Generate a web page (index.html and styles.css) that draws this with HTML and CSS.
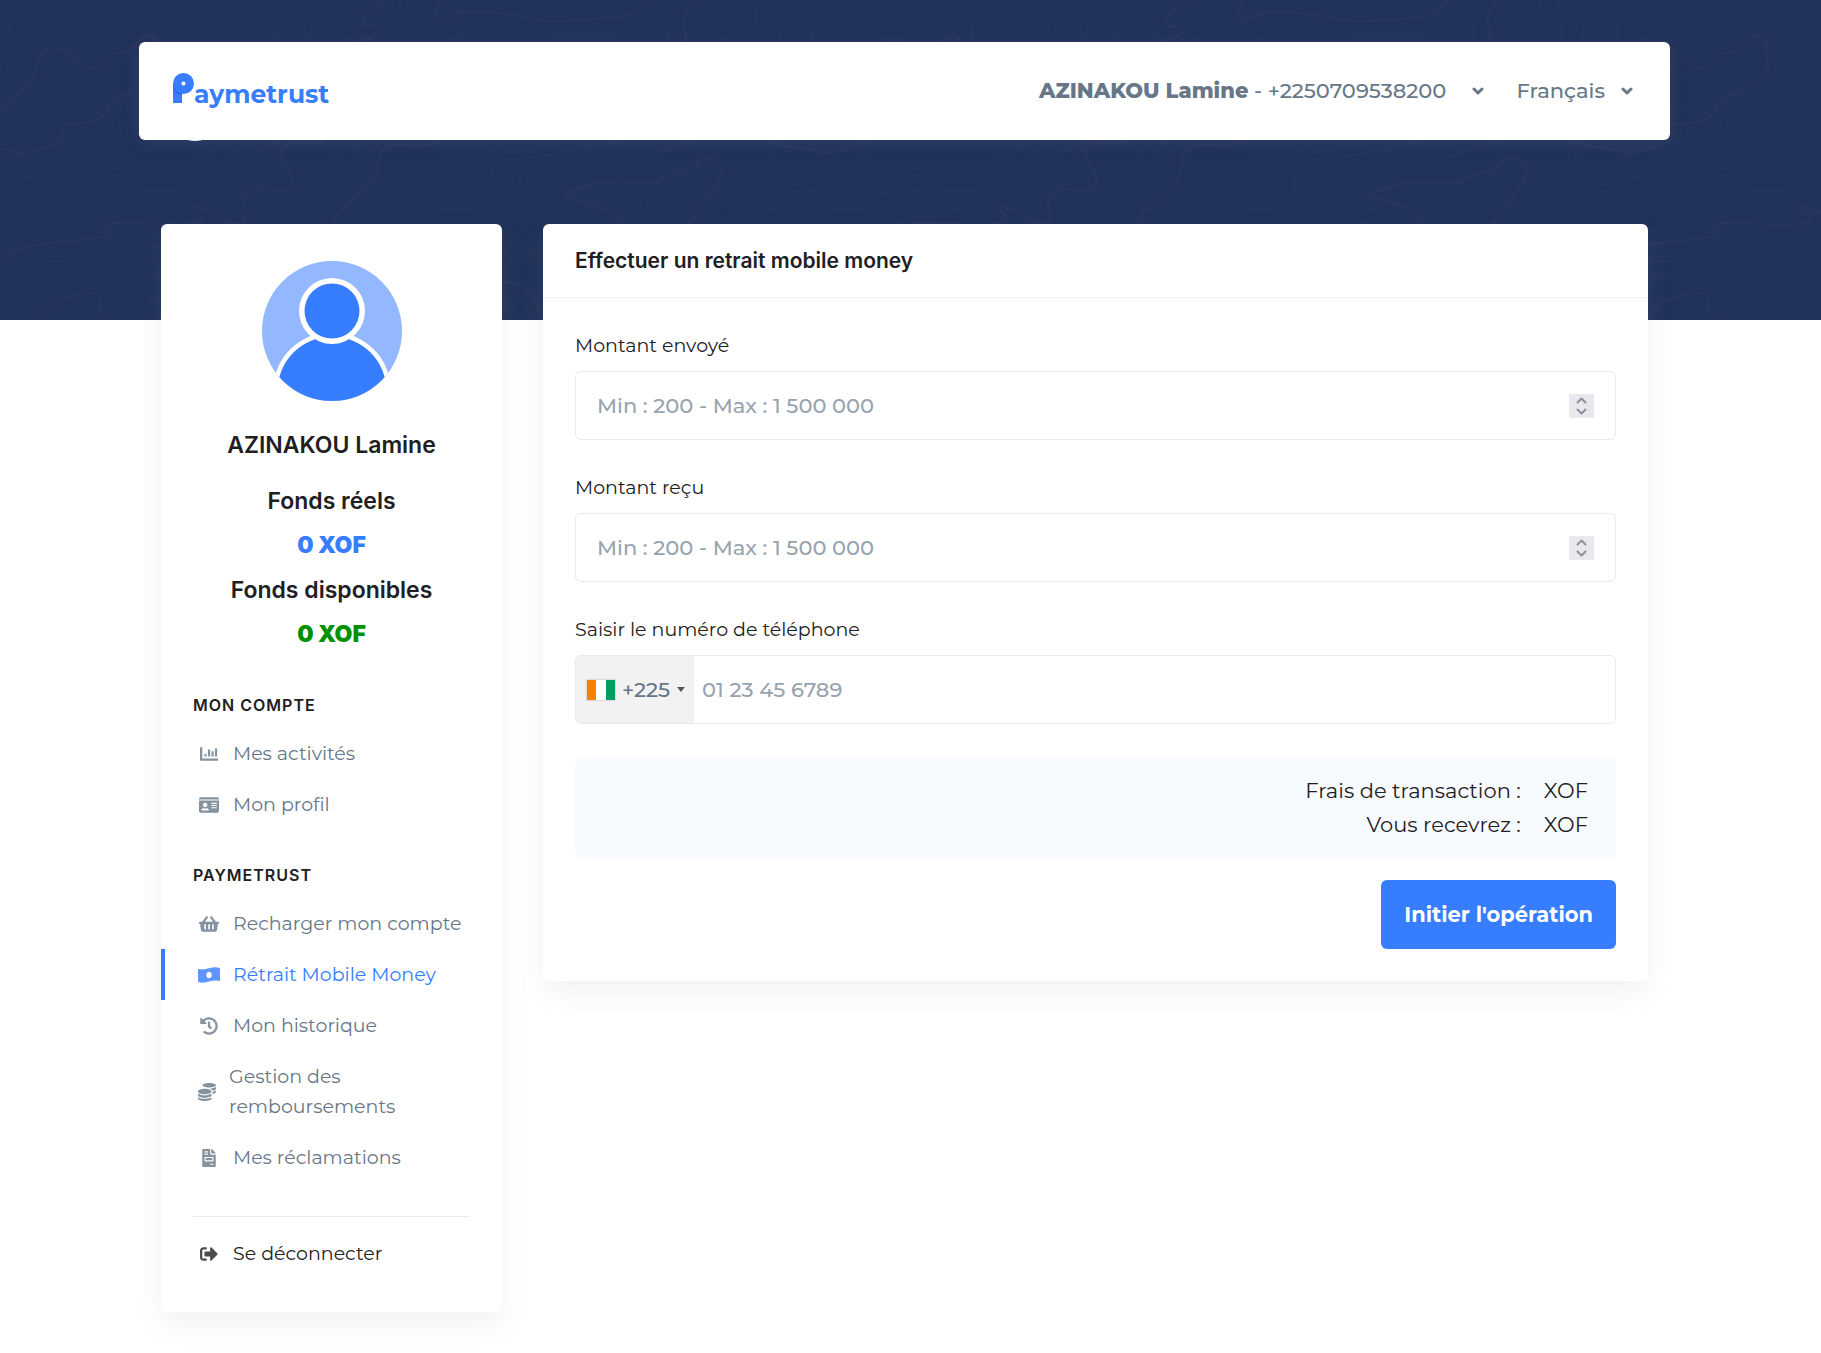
FILE: index.html
```html
<!DOCTYPE html>
<html lang="fr">
<head>
  <meta charset="utf-8">
  <meta name="viewport" content="width=device-width, initial-scale=1">
  <title>Paymetrust - Retrait Mobile Money</title>
  <link rel="stylesheet" href="styles.css">
</head>
<body>
  <div class="page">
    <svg class="hero" aria-hidden="true">
      <defs>
        <g id="contours" fill="none">
          <g stroke="#29355f" stroke-width="2">
            <path d="M-20 130Q-8 118 0 110T23 90T34 77Q38 58 42 53T55 48T80 62T103 63T126 53L143 37Q149 32 155 39Q161 48 160 58Q158 72 154 77T131 90T107 110T79 123T63 133T36 150T18 155T-4 148T-24 140"/>
            <path d="M-10 266Q10 252 23 248T80 240T109 228T153 224T199 213T218 216T245 210T272 190T287 167T306 143T330 100T356 42T371 27T385 0"/>
            <path d="M333 223Q340 210 348 203T367 187T379 160T406 145T440 140"/>
            <path d="M440 0L435 14Q436 21 446 19L460 12Q466 10 495 13T539 20T625 16Q636 12 644 0"/>
            <path d="M693 0Q680 18 684 28T683 42"/>
            <path d="M622 223Q614 215 606 210T578 200T572 191T594 184T634 182T657 183T677 173T697 161Q710 156 715 160Q724 166 722 174T701 207T691 223"/>
            <path d="M38 320Q52 302 57 300T82 294T100 302T111 320"/>
            <path d="M503 282Q515 282 520 285T530 293T540 312"/>
          </g>
          <g stroke="#263660" stroke-width="1">
            <path d="M34 0Q48 8 57 9T84 15T103 12T124 0"/>
            <path d="M0 70Q6 55 8 40T10 0"/>
            <path d="M0 97Q12 84 19 73T31 50T42 33T57 28T80 37T99 37T126 23L153 13Q166 10 167 22T170 50T158 90T135 100T117 113T87 137T67 143T44 168T22 173T-8 163T-32 155T-39 140"/>
            <path d="M57 62Q70 80 77 78L108 73Q121 76 117 84T103 97T69 110T34 132T19 134T8 120T23 103T42 87T50 67Q53 60 57 62Z"/>
            <path d="M0 182Q20 180 38 177T77 172T134 166T172 165T199 158T218 140"/>
            <path d="M0 191Q20 190 38 187T77 180T126 175T172 178T207 173T230 157T245 140"/>
            <path d="M0 200Q25 199 46 197T96 192T134 190T191 190T226 182T256 153T272 140"/>
            <path d="M0 212Q30 211 57 208T100 203T142 192T180 203T207 203T237 193T268 167T291 140"/>
            <path d="M0 240Q20 234 38 232T77 227T103 220T134 212T161 208"/>
            <path d="M0 272Q20 260 38 258T69 255T100 255T130 245T161 237"/>
            <path d="M0 297Q8 282 15 277T38 265T92 265T126 257T161 248"/>
            <path d="M0 308Q8 295 15 290T38 273"/>
            <path d="M3 320Q20 292 30 285T62 279T100 278Q115 278 117 292T128 320"/>
            <path d="M132 279Q150 276 161 277M132 279Q136 294 150 296T160 320"/>
            <path d="M268 223Q290 205 302 197T321 177T333 160T342 140"/>
            <path d="M291 223Q305 202 318 197T348 178T356 157T364 140"/>
            <path d="M314 223Q326 200 340 193T361 170T370 153T382 140"/>
            <path d="M390 223Q405 203 412 195T430 190T442 177T450 157T480 157T530 158T610 143T680 141"/>
            <path d="M417 223Q440 207 450 209T477 207T492 193T493 160T510 153Q520 150 534 153T589 158T650 155T690 140"/>
            <path d="M520 180Q516 166 530 169T580 172T640 160T700 141M520 180Q525 196 550 203T590 223"/>
            <path d="M649 215Q642 207 653 198T680 178T710 172Q714 180 700 195T675 213T649 215Z"/>
            <path d="M500 225Q530 212 550 220T590 226"/>
            <path d="M724 223Q735 197 748 187T780 182T804 182"/>
            <path d="M735 223Q752 200 768 196T804 191"/>
            <path d="M750 223Q768 209 782 206T804 200"/>
            <path d="M190 0V42M218 0V42M251 0V42M281 0Q275 20 277 30T280 42"/>
            <path d="M310 42Q309 23 318 17T346 13T364 0"/>
            <path d="M344 42Q370 22 384 19T402 0M366 42Q390 22 400 16T414 0M390 42Q410 22 418 14T428 0"/>
            <path d="M450 42Q465 28 480 27T550 33T640 27Q650 20 652 0"/>
            <path d="M470 0Q540 10 560 9T620 0"/>
            <path d="M668 42Q670 25 666 0M722 42Q740 28 736 0M758 42Q756 20 755 0M780 42Q779 20 775 0"/>
            <path d="M503 250Q520 244 543 252M503 295Q522 292 530 320M503 303Q516 302 520 320M503 310Q510 312 512 320"/>
          </g>
        </g>
        <pattern id="topography" width="804" height="320" patternUnits="userSpaceOnUse">
          <use href="#contours" x="-804"/>
          <use href="#contours"/>
          <use href="#contours" x="804"/>
        </pattern>
      </defs>
      <rect width="100%" height="100%" fill="#21325b"/>
      <rect width="100%" height="100%" fill="url(#topography)"/>
    </svg>

    <div class="container">
      <div class="topbar-wrap">
        <span class="topbar-bump" aria-hidden="true"></span>
        <header class="topbar">
          <a class="logo" href="#" aria-label="Paymetrust">
            <svg width="21" height="30" viewBox="0 0 21 30" aria-hidden="true">
              <path d="M0 10H9V30H0Z" fill="#377dff"/>
              <path d="M0 15Q3 21 9 21.500V20L2 12Z" fill="#1f5fd0"/>
              <circle cx="10.500" cy="10.500" r="10.500" fill="#377dff"/>
              <circle cx="10.500" cy="10.500" r="2" fill="#fff"/>
            </svg>
            <span class="logo-text">aymetrust</span>
          </a>
          <nav class="topbar-nav" aria-label="Compte">
            <button class="menu-button menu-button-user" type="button">
              <span><strong>AZINAKOU Lamine</strong> - +2250709538200</span>
              <svg width="12" height="8" viewBox="0 0 12 8" aria-hidden="true"><path d="M2 2L6 6L10 2" fill="none" stroke="currentColor" stroke-width="3" stroke-linecap="round" stroke-linejoin="round"/></svg>
            </button>
            <button class="menu-button" type="button">
              <span>Français</span>
              <svg width="12" height="8" viewBox="0 0 12 8" aria-hidden="true"><path d="M2 2L6 6L10 2" fill="none" stroke="currentColor" stroke-width="3" stroke-linecap="round" stroke-linejoin="round"/></svg>
            </button>
          </nav>
        </header>
      </div>

      <div class="layout">
        <aside class="card sidebar">
          <svg class="avatar" width="140" height="140" viewBox="0 0 140 140" role="img" aria-label="Avatar">
            <clipPath id="disc"><circle cx="70" cy="70" r="70"/></clipPath>
            <g clip-path="url(#disc)">
              <rect width="140" height="140" fill="#93b8ff"/>
              <circle cx="70" cy="130" r="59" fill="#fff"/>
              <circle cx="70" cy="130" r="54.500" fill="#377dff"/>
              <circle cx="70" cy="50" r="33" fill="#fff"/>
              <circle cx="70" cy="50" r="27.500" fill="#377dff"/>
            </g>
          </svg>
          <h2 class="user-name">AZINAKOU Lamine</h2>
          <dl class="funds">
            <dt>Fonds réels</dt>
            <dd>0 XOF</dd>
            <dt>Fonds disponibles</dt>
            <dd class="available">0 XOF</dd>
          </dl>

          <h3 class="nav-title">Mon compte</h3>
          <ul class="nav">
            <li><a href="#"><span class="icon"><svg viewBox="0 0 512 512" width="18" height="18" aria-hidden="true"><path d="M0 64H64V384H512V448H32Q0 448 0 416ZM128 256H188V328H128ZM228 128H288V328H228ZM328 176H388V328H328ZM428 96H488V328H428Z"/></svg></span>Mes activités</a></li>
            <li><a href="#"><span class="icon"><svg viewBox="0 0 576 512" width="20" height="18" aria-hidden="true"><path fill-rule="evenodd" d="M528 32H48C21.500 32 0 53.500 0 80v16h576V80c0-26.500-21.500-48-48-48zM0 432c0 26.500 21.500 48 48 48h480c26.500 0 48-21.500 48-48V128H0v304zm352-240h160v32H352zm0 64h160v32H352zm0 64h160v32H352zM176 192c35.300 0 64 28.700 64 64s-28.700 64-64 64-64-28.700-64-64 28.700-64 64-64zM67.100 396.200C75.500 370.500 99.600 352 128 352h8.200c12.300 5.100 25.700 8 39.800 8s27.600-2.900 39.800-8h8.200c28.400 0 52.500 18.500 60.900 44.200 3.200 9.900-5.200 19.800-15.600 19.800H82.700c-10.400 0-18.800-10-15.600-19.800z"/></svg></span>Mon profil</a></li>
          </ul>

          <h3 class="nav-title">Paymetrust</h3>
          <ul class="nav">
            <li><a href="#"><span class="icon"><svg viewBox="0 0 576 512" width="20" height="18" aria-hidden="true"><path fill-rule="evenodd" d="M576 216v16c0 13.255-10.745 24-24 24h-8l-26.113 182.788C514.509 462.435 494.257 480 470.370 480H105.630c-23.887 0-44.139-17.565-47.518-41.212L32 256h-8c-13.255 0-24-10.745-24-24v-16c0-13.255 10.745-24 24-24h67.341l106.780-146.821c10.395-14.292 30.407-17.453 44.701-7.058 14.293 10.395 17.453 30.408 7.058 44.701L170.477 192h235.046L326.120 82.821c-10.395-14.292-7.234-34.306 7.059-44.701 14.291-10.395 34.306-7.235 44.701 7.058L484.659 192H552c13.255 0 24 10.745 24 24zM312 392V280c0-13.255-10.745-24-24-24s-24 10.745-24 24v112c0 13.255 10.745 24 24 24s24-10.745 24-24zm112 0V280c0-13.255-10.745-24-24-24s-24 10.745-24 24v112c0 13.255 10.745 24 24 24s24-10.745 24-24zm-224 0V280c0-13.255-10.745-24-24-24s-24 10.745-24 24v112c0 13.255 10.745 24 24 24s24-10.745 24-24z"/></svg></span>Recharger mon compte</a></li>
            <li><a class="active" href="#" aria-current="page"><span class="icon"><svg viewBox="0 0 640 512" width="22" height="18" aria-hidden="true"><path d="M621.160 54.460C582.370 38.190 543.550 32 504.750 32c-123.170-.01-246.330 62.340-369.500 62.340-30.890 0-61.760-3.920-92.650-13.720-3.470-1.100-6.950-1.620-10.350-1.620C15.040 79 0 92.320 0 110.810v317.260c0 12.630 7.230 24.600 18.840 29.460C57.630 473.810 96.450 480 135.250 480c123.170 0 246.340-62.350 369.510-62.350 30.890 0 61.760 3.920 92.650 13.720 3.470 1.100 6.950 1.620 10.350 1.620 17.210 0 32.250-13.320 32.250-31.810V83.930c-.01-12.640-7.240-24.600-18.850-29.470zM320 352c-44.190 0-80-42.990-80-96 0-53.020 35.820-96 80-96s80 42.980 80 96c0 53.030-35.830 96-80 96z"/></svg></span>Rétrait Mobile Money</a></li>
            <li><a href="#"><span class="icon"><svg viewBox="0 0 512 512" width="18" height="18" aria-hidden="true"><path d="M504 255.531c.253 136.640-111.180 248.372-247.820 248.468-59.015.042-113.223-20.530-155.822-54.911-11.077-8.940-11.905-25.541-1.839-35.607l11.267-11.267c8.609-8.609 22.353-9.551 31.891-1.984C173.062 425.135 212.781 440 256 440c101.705 0 184-82.311 184-184 0-101.705-82.311-184-184-184-48.814 0-93.149 18.969-126.068 49.932l50.754 50.754c10.080 10.080 2.941 27.314-11.313 27.314H24c-8.837 0-16-7.163-16-16V38.627c0-14.254 17.234-21.393 27.314-11.314l49.372 49.372C129.209 34.136 189.552 8 256 8c136.810 0 247.747 110.780 248 247.531zm-180.912 78.784l9.823-12.630c8.138-10.463 6.253-25.542-4.210-33.679L288 256.349V152c0-13.255-10.745-24-24-24h-16c-13.255 0-24 10.745-24 24v135.651l65.409 50.874c10.463 8.137 25.541 6.253 33.679-4.210z"/></svg></span>Mon historique</a></li>
            <li><a href="#"><span class="icon icon-narrow"><svg viewBox="0 0 512 512" width="18" height="18" aria-hidden="true"><path d="M0 405.300V448c0 35.300 86 64 192 64s192-28.700 192-64v-42.700C342.700 434.400 267.200 448 192 448S41.300 434.400 0 405.300zM320 128c106 0 192-28.700 192-64S426 0 320 0 128 28.700 128 64s86 64 192 64zM0 300.400V352c0 35.300 86 64 192 64s192-28.700 192-64v-51.600c-41.300 34-116.900 51.600-192 51.600S41.300 334.400 0 300.400zm416 11c57.300-11.100 96-31.700 96-55.400v-42.700c-23.200 16.400-57.300 27.600-96 34.500v63.600zM192 160C86 160 0 195.800 0 240s86 80 192 80 192-35.800 192-80-86-80-192-80zm219.300 56.300c60-10.800 100.700-32 100.700-56.300v-42.700c-35.500 25.100-96.500 38.600-160.700 41.800 29.500 14.300 51.200 33.500 60 57.200z"/></svg></span>Gestion des remboursements</a></li>
            <li><a href="#"><span class="icon"><svg viewBox="0 0 384 512" width="14" height="18" aria-hidden="true"><path fill-rule="evenodd" d="M288 256H96v64h192v-64zm89-151L279.100 7c-4.500-4.500-10.600-7-17-7H256v128h128v-6.100c0-6.300-2.500-12.400-7-16.900zm-153 31V0H24C10.700 0 0 10.700 0 24v464c0 13.300 10.700 24 24 24h336c13.300 0 24-10.700 24-24V160H248c-13.200 0-24-10.800-24-24zM64 64h96v32H64zm0 64h96v32H64zM320 448h-96v-32h96zm0-208v96c0 8.840-7.160 16-16 16H80c-8.840 0-16-7.160-16-16v-96c0-8.840 7.160-16 16-16h224c8.840 0 16 7.160 16 16z"/></svg></span>Mes réclamations</a></li>
          </ul>

          <hr class="divider">
          <a class="logout" href="#"><span class="icon"><svg viewBox="0 0 512 512" width="18" height="18" aria-hidden="true"><path d="M497 273L329 441c-15 15-41 4.500-41-17v-96H152c-13.300 0-24-10.700-24-24v-96c0-13.300 10.700-24 24-24h136V88c0-21.400 25.900-32 41-17l168 168c9.300 9.400 9.300 24.600 0 34zM192 436v-40c0-6.600-5.400-12-12-12H96c-17.700 0-32-14.300-32-32V160c0-17.700 14.300-32 32-32h84c6.600 0 12-5.400 12-12V76c0-6.600-5.400-12-12-12H96c-53 0-96 43-96 96v192c0 53 43 96 96 96h84c6.600 0 12-5.400 12-12z"/></svg></span>Se déconnecter</a>
        </aside>

        <main class="card">
          <h1 class="card-title">Effectuer un retrait mobile money</h1>
          <form class="card-body">
            <div class="form-group">
              <label for="sent">Montant envoyé</label>
              <div class="field">
                <input id="sent" type="number" placeholder="Min : 200 - Max : 1 500 000">
                <span class="stepper" aria-hidden="true"><svg width="11" height="18" viewBox="0 0 11 18"><path d="M1.500 5.500L5.500 1.500L9.500 5.500M1.500 12.500L5.500 16.500L9.500 12.500" fill="none" stroke="#8f8f9d" stroke-width="2" stroke-linecap="round" stroke-linejoin="round"/></svg></span>
              </div>
            </div>
            <div class="form-group">
              <label for="received">Montant reçu</label>
              <div class="field">
                <input id="received" type="number" placeholder="Min : 200 - Max : 1 500 000">
                <span class="stepper" aria-hidden="true"><svg width="11" height="18" viewBox="0 0 11 18"><path d="M1.500 5.500L5.500 1.500L9.500 5.500M1.500 12.500L5.500 16.500L9.500 12.500" fill="none" stroke="#8f8f9d" stroke-width="2" stroke-linecap="round" stroke-linejoin="round"/></svg></span>
              </div>
            </div>
            <div class="form-group">
              <label for="phone">Saisir le numéro de téléphone</label>
              <div class="field field-phone">
                <button class="dial-code" type="button" aria-label="Indicatif +225">
                  <svg class="flag" width="28" height="20" viewBox="0 0 28 20" aria-hidden="true"><rect width="28" height="20" fill="#fff"/><rect width="9" height="20" fill="#f77f00"/><rect x="19" width="9" height="20" fill="#009e60"/></svg>
                  <span>+225</span>
                  <svg class="caret" width="8" height="5" viewBox="0 0 8 5" aria-hidden="true"><path d="M0 0H8L4 5Z" fill="#555"/></svg>
                </button>
                <input id="phone" type="tel" placeholder="01 23 45 6789">
              </div>
            </div>
            <dl class="summary">
              <dt>Frais de transaction :</dt><dd>XOF</dd>
              <dt>Vous recevrez :</dt><dd>XOF</dd>
            </dl>
            <button class="submit" type="button">Initier l'opération</button>
          </form>
        </main>
      </div>
    </div>
  </div>
</body>
</html>
```

FILE: styles.css
```css
*,
*::before,
*::after {
  box-sizing: border-box;
}

body {
  margin: 0;
  background: #fff;
  color: #1e2022;
  font-family: Montserrat, Inter, "Open Sans", sans-serif;
  font-size: 21px;
  line-height: 30px;
}

h1, h2, h3, ul, dl, dd {
  margin: 0;
  padding: 0;
}

button,
input {
  font: inherit;
  color: inherit;
}

.page {
  position: relative;
}

.hero {
  position: absolute;
  top: 0;
  left: 0;
  width: 100%;
  height: 320px;
}

.container {
  position: relative;
  padding: 42px 151px 40px 139px;
}

/* Top bar */

.topbar-wrap {
  position: relative;
}

.topbar {
  position: relative;
  display: flex;
  align-items: center;
  justify-content: space-between;
  min-height: 98px;
  padding: 0 37px 0 34px;
  border-radius: 6px;
  background: #fff;
  box-shadow: 0 3px 18px rgba(140, 152, 164, 0.12);
}

.topbar-bump {
  position: absolute;
  bottom: -1px;
  left: 29px;
  width: 54px;
  height: 54px;
  border-radius: 50%;
  background: #fff;
}

.logo {
  display: flex;
  align-items: baseline;
  color: #377dff;
  font-size: 25px;
  font-weight: 700;
  text-decoration: none;
}

.topbar-nav {
  display: flex;
  gap: 32px;
  color: #677788;
  font-weight: 500;
}

.topbar-nav strong {
  font-weight: 800;
}

.menu-button {
  display: flex;
  align-items: center;
  gap: 16px;
  padding: 0;
  border: 0;
  background: none;
  cursor: pointer;
}

.menu-button-user {
  gap: 26px;
}

/* Cards */

.layout {
  display: grid;
  grid-template-columns: 341px minmax(0, 1fr);
  gap: 41px;
  align-items: start;
  margin-top: 84px;
  padding: 0 22px;
}

.card {
  border-radius: 6px;
  background: #fff;
  box-shadow: 0 11px 26px rgba(140, 152, 164, 0.12);
}

/* Sidebar */

.sidebar {
  padding: 37px 0 33px;
}

.avatar {
  display: block;
  margin: 0 auto 29px;
}

.user-name,
.funds {
  font-family: Inter, "Open Sans", sans-serif;
  font-size: 23px;
  font-weight: 600;
  text-align: center;
}

.funds {
  margin-top: 26px;
}

.funds dd {
  margin: 14px 0 15px;
  color: #377dff;
  font-weight: 900;
}

.funds .available {
  margin-bottom: 0;
  color: #009100;
}

.nav-title {
  margin: 35px 32px 13px;
  font-family: Inter, "Open Sans", sans-serif;
  font-size: 16px;
  font-weight: 600;
  line-height: 20px;
  letter-spacing: 1px;
  text-transform: uppercase;
}

.funds + .nav-title {
  margin-top: 46px;
}

.nav {
  list-style: none;
}

.nav a,
.logout {
  display: flex;
  align-items: center;
  gap: 13px;
  padding: 11px 32px 10px 33px;
  border-left: 4px solid transparent;
  color: #677788;
  font-size: 19px;
  text-decoration: none;
}

.nav .active {
  border-color: #377dff;
  color: #377dff;
}

.icon {
  display: flex;
  flex: none;
  justify-content: center;
  width: 22px;
  opacity: 0.8;
}

.icon-narrow {
  width: 18px;
}

.icon svg {
  fill: currentColor;
}

.divider {
  height: 1px;
  margin: 33px 32px 11px;
  border: 0;
  background: #e7eaf3;
}

.logout {
  color: #1e2022;
}

/* Form */

.card-title {
  padding: 22px 32px 21px;
  border-bottom: 1px solid #eef0f6;
  font-family: Inter, "Open Sans", sans-serif;
  font-size: 21px;
  font-weight: 600;
}

.card-body {
  display: flex;
  flex-direction: column;
  gap: 33px;
  padding: 33px 32px 32px;
}

.form-group {
  display: flex;
  flex-direction: column;
  gap: 10px;
  font-size: 19px;
}

.field {
  display: flex;
  align-items: center;
  height: 69px;
  padding: 0 21px 0 21px;
  border: 1px solid #e7eaf3;
  border-radius: 6px;
  color: #677788;
  font-size: 21px;
  font-weight: 500;
}

.field input {
  flex: 1;
  min-width: 0;
  padding: 0;
  border: 0;
  outline: 0;
  background: none;
}

.field input::placeholder {
  color: #97a4af;
  opacity: 1;
}

.field input[type="number"] {
  appearance: textfield;
}

.field input::-webkit-inner-spin-button {
  display: none;
}

.stepper {
  display: flex;
  align-items: center;
  justify-content: center;
  width: 25px;
  height: 24px;
  background: #e9e9ed;
}

.field-phone {
  gap: 8px;
  padding-left: 0;
}

.dial-code {
  display: flex;
  align-items: center;
  gap: 7px;
  height: 100%;
  width: 118px;
  padding: 0 8px 0 11px;
  border: 0;
  border-radius: 5px 0 0 5px;
  background: #f2f2f2;
}

.flag {
  box-shadow: 0 0 1px 1px #ddd;
}

.summary {
  display: grid;
  grid-template-columns: 1fr auto;
  column-gap: 23px;
  padding: 17px 28px;
  border-radius: 6px;
  background: #f7faff;
  line-height: 34px;
  text-align: right;
}

.submit {
  align-self: flex-end;
  height: 69px;
  margin-top: -12px;
  padding: 0 23px;
  border: 0;
  border-radius: 6px;
  background: #377dff;
  color: #fff;
  font-weight: 700;
  cursor: pointer;
}
```
